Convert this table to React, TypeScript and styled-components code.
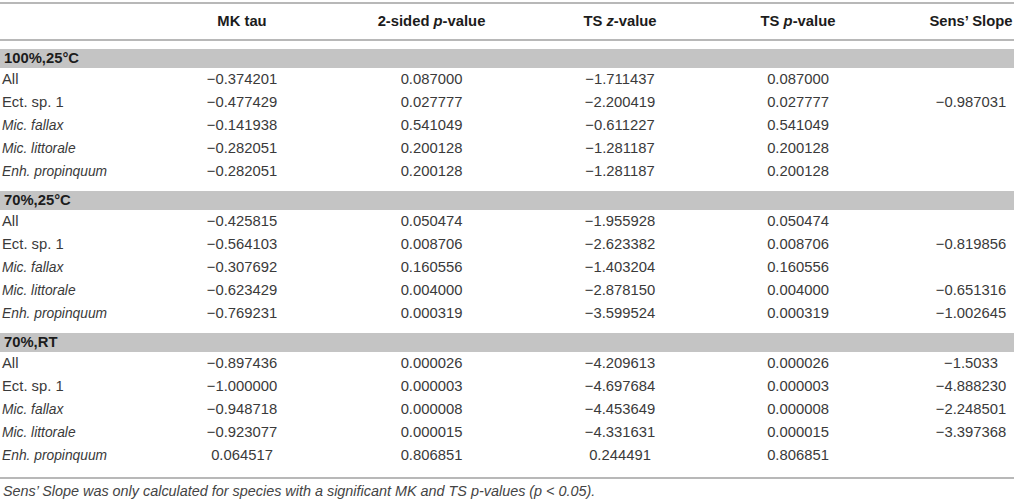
import styled, { createGlobalStyle } from 'styled-components';

const GlobalStyle = createGlobalStyle`
  html, body {
    margin: 0;
    padding: 0;
    background: #ffffff;
  }
  body {
    font-family: 'Liberation Sans', Arial, sans-serif;
    color: #3a3a3a;
  }
`;

const Page = styled.div`
  width: 1016px;
  height: 501px;
  padding-top: 2px;
  box-sizing: border-box;
  overflow: hidden;
`;

const Table = styled.div`
  width: 1014px;
  border-top: 2px solid #b8b8b8;
`;

// widths picked so the centred numbers sit under their headings
const Row = styled.div<{ $head?: boolean }>`
  display: grid;
  grid-template-columns: 147px 190px 189px 188px 168px 132px;
  align-items: baseline;
  height: ${(p) => (p.$head ? '35px' : '23px')};
  line-height: ${(p) => (p.$head ? '35px' : '23px')};
  font-size: 14.8px;
  white-space: nowrap;
  ${(p) =>
    p.$head &&
    `
    font-weight: bold;
    color: #1c1c1c;
    border-bottom: 2px solid #b8b8b8;
  `}
`;

// species names are set a little narrower than the figures
const Label = styled.div<{ $italic?: boolean }>`
  padding-left: 2px;
  font-style: ${(p) => (p.$italic ? 'italic' : 'normal')};
  font-size: ${(p) => (p.$italic ? '13.8px' : '14.8px')};
`;

const Cell = styled.div<{ $last?: boolean }>`
  text-align: center;
  padding-left: ${(p) => (p.$last ? '46px' : '0')};
`;

const Band = styled.div`
  margin-top: 8px;
  height: 19px;
  line-height: 19px;
  background: #c4c4c4;
  padding-left: 4px;
  font-size: 14.8px;
  font-weight: bold;
  color: #1c1c1c;
`;

const Section = styled.div`
  &:last-child {
    border-bottom: 2px solid #b8b8b8;
    padding-bottom: 10px;
  }
`;

const Note = styled.p`
  margin: 4px 0 0 3px;
  font-size: 14.4px;
  line-height: 16px;
  font-style: italic;
  color: #444;
  white-space: nowrap;
`;

type Line = [string, boolean, string, string, string, string, string];

const sections: { title: string; rows: Line[] }[] = [
  {
    title: '100%,25°C',
    rows: [
      ['All', false, '−0.374201', '0.087000', '−1.711437', '0.087000', ''],
      ['Ect. sp. 1', false, '−0.477429', '0.027777', '−2.200419', '0.027777', '−0.987031'],
      ['Mic. fallax', true, '−0.141938', '0.541049', '−0.611227', '0.541049', ''],
      ['Mic. littorale', true, '−0.282051', '0.200128', '−1.281187', '0.200128', ''],
      ['Enh. propinquum', true, '−0.282051', '0.200128', '−1.281187', '0.200128', ''],
    ],
  },
  {
    title: '70%,25°C',
    rows: [
      ['All', false, '−0.425815', '0.050474', '−1.955928', '0.050474', ''],
      ['Ect. sp. 1', false, '−0.564103', '0.008706', '−2.623382', '0.008706', '−0.819856'],
      ['Mic. fallax', true, '−0.307692', '0.160556', '−1.403204', '0.160556', ''],
      ['Mic. littorale', true, '−0.623429', '0.004000', '−2.878150', '0.004000', '−0.651316'],
      ['Enh. propinquum', true, '−0.769231', '0.000319', '−3.599524', '0.000319', '−1.002645'],
    ],
  },
  {
    title: '70%,RT',
    rows: [
      ['All', false, '−0.897436', '0.000026', '−4.209613', '0.000026', '−1.5033'],
      ['Ect. sp. 1', false, '−1.000000', '0.000003', '−4.697684', '0.000003', '−4.888230'],
      ['Mic. fallax', true, '−0.948718', '0.000008', '−4.453649', '0.000008', '−2.248501'],
      ['Mic. littorale', true, '−0.923077', '0.000015', '−4.331631', '0.000015', '−3.397368'],
      ['Enh. propinquum', true, '0.064517', '0.806851', '0.244491', '0.806851', ''],
    ],
  },
];

const App = () => {
  return (
    <Page>
      <GlobalStyle />
      <Table>
        <Row $head>
          <Label />
          <Cell>MK tau</Cell>
          <Cell>
            2-sided <i>p</i>-value
          </Cell>
          <Cell>
            TS <i>z</i>-value
          </Cell>
          <Cell>
            TS <i>p</i>-value
          </Cell>
          <Cell $last>Sens’ Slope</Cell>
        </Row>
        {sections.map((s) => (
          <Section key={s.title}>
            <Band>{s.title}</Band>
            {s.rows.map((r) => (
              <Row key={s.title + r[0]}>
                <Label $italic={r[1]}>{r[0]}</Label>
                <Cell>{r[2]}</Cell>
                <Cell>{r[3]}</Cell>
                <Cell>{r[4]}</Cell>
                <Cell>{r[5]}</Cell>
                <Cell $last>{r[6]}</Cell>
              </Row>
            ))}
          </Section>
        ))}
      </Table>
      <Note>
        Sens’ Slope was only calculated for species with a significant MK and TS p-values (p &lt; 0.05).
      </Note>
    </Page>
  );
};

export default App;
